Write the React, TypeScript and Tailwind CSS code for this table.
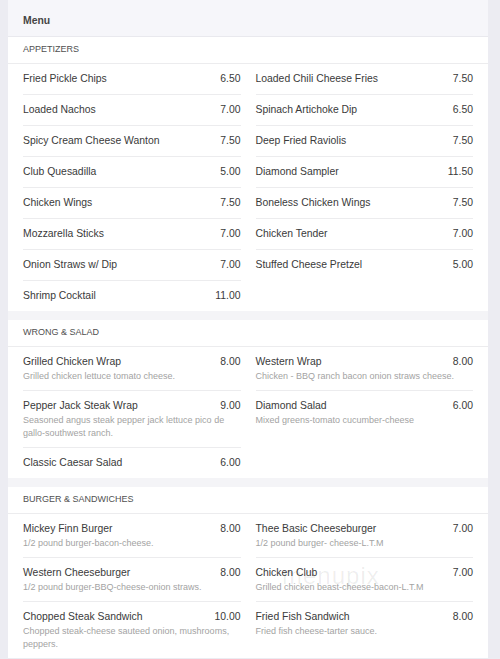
type Item = { name: string; price: string; desc?: string };

type Section = { title: string; items: Item[] };

const sections: Section[] = [
  {
    title: "APPETIZERS",
    items: [
      { name: "Fried Pickle Chips", price: "6.50" },
      { name: "Loaded Chili Cheese Fries", price: "7.50" },
      { name: "Loaded Nachos", price: "7.00" },
      { name: "Spinach Artichoke Dip", price: "6.50" },
      { name: "Spicy Cream Cheese Wanton", price: "7.50" },
      { name: "Deep Fried Raviolis", price: "7.50" },
      { name: "Club Quesadilla", price: "5.00" },
      { name: "Diamond Sampler", price: "11.50" },
      { name: "Chicken Wings", price: "7.50" },
      { name: "Boneless Chicken Wings", price: "7.50" },
      { name: "Mozzarella Sticks", price: "7.00" },
      { name: "Chicken Tender", price: "7.00" },
      { name: "Onion Straws w/ Dip", price: "7.00" },
      { name: "Stuffed Cheese Pretzel", price: "5.00" },
      { name: "Shrimp Cocktail", price: "11.00" },
    ],
  },
  {
    title: "WRONG & SALAD",
    items: [
      { name: "Grilled Chicken Wrap", price: "8.00", desc: "Grilled chicken lettuce tomato cheese." },
      { name: "Western Wrap", price: "8.00", desc: "Chicken - BBQ ranch bacon onion straws cheese." },
      {
        name: "Pepper Jack Steak Wrap",
        price: "9.00",
        desc: "Seasoned angus steak pepper jack lettuce pico de gallo-southwest ranch.",
      },
      { name: "Diamond Salad", price: "6.00", desc: "Mixed greens-tomato cucumber-cheese" },
      { name: "Classic Caesar Salad", price: "6.00" },
    ],
  },
  {
    title: "BURGER & SANDWICHES",
    items: [
      { name: "Mickey Finn Burger", price: "8.00", desc: "1/2 pound burger-bacon-cheese." },
      { name: "Thee Basic Cheeseburger", price: "7.00", desc: "1/2 pound burger- cheese-L.T.M" },
      { name: "Western Cheeseburger", price: "8.00", desc: "1/2 pound burger-BBQ-cheese-onion straws." },
      { name: "Chicken Club", price: "7.00", desc: "Grilled chicken beast-cheese-bacon-L.T.M" },
      {
        name: "Chopped Steak Sandwich",
        price: "10.00",
        desc: "Chopped steak-cheese sauteed onion, mushrooms, peppers.",
      },
      { name: "Fried Fish Sandwich", price: "8.00", desc: "Fried fish cheese-tarter sauce." },
    ],
  },
];

function MenuRow({ item, first }: { item: Item; first: boolean }) {
  return (
    <div className={`pt-[7px] pb-[7px] ${first ? "" : "border-t border-[#ececee]"}`}>
      <div className="flex items-start justify-between gap-2 text-[10.4px] leading-[16px] text-[#3a3a3a]">
        <span>{item.name}</span>
        <span className="shrink-0">{item.price}</span>
      </div>
      {item.desc && (
        <p className="text-[9px] leading-[13px] text-[#a3a3a3]">{item.desc}</p>
      )}
    </div>
  );
}

export default function App() {
  return (
    <div
      className="relative h-[659px] w-[500px] overflow-hidden bg-[#ececf2]"
      style={{ fontFamily: '"Liberation Sans", Arial, sans-serif' }}
    >
      <div className="ml-[8px] flex w-[480px] flex-col gap-[9px] bg-[#f4f4f7]">
        {sections.map((section, si) => (
          <div key={section.title} className="bg-white">
            {si === 0 && (
              <div className="h-[37px] border-b border-[#e9e9ee] bg-[#f6f6fa] px-[15px] pt-[14px] text-[10.4px] font-bold leading-[14px] text-[#454545]">
                Menu
              </div>
            )}
            {/* section header */}
            <div className="flex h-[27px] items-center border-b border-[#ececee] px-[15px] text-[9px] text-[#505050]">
              {section.title}
            </div>
            <div className="grid grid-cols-2 gap-x-[15px] px-[15px]">
              {section.items.map((item, i) => (
                <MenuRow key={item.name} item={item} first={i < 2} />
              ))}
            </div>
          </div>
        ))}
      </div>
      {/* watermark */}
      <div className="pointer-events-none absolute left-[282px] top-[562px] text-[24px] leading-[28px] tracking-[1px] text-black/[0.07]">
        menupix
      </div>
    </div>
  );
}
